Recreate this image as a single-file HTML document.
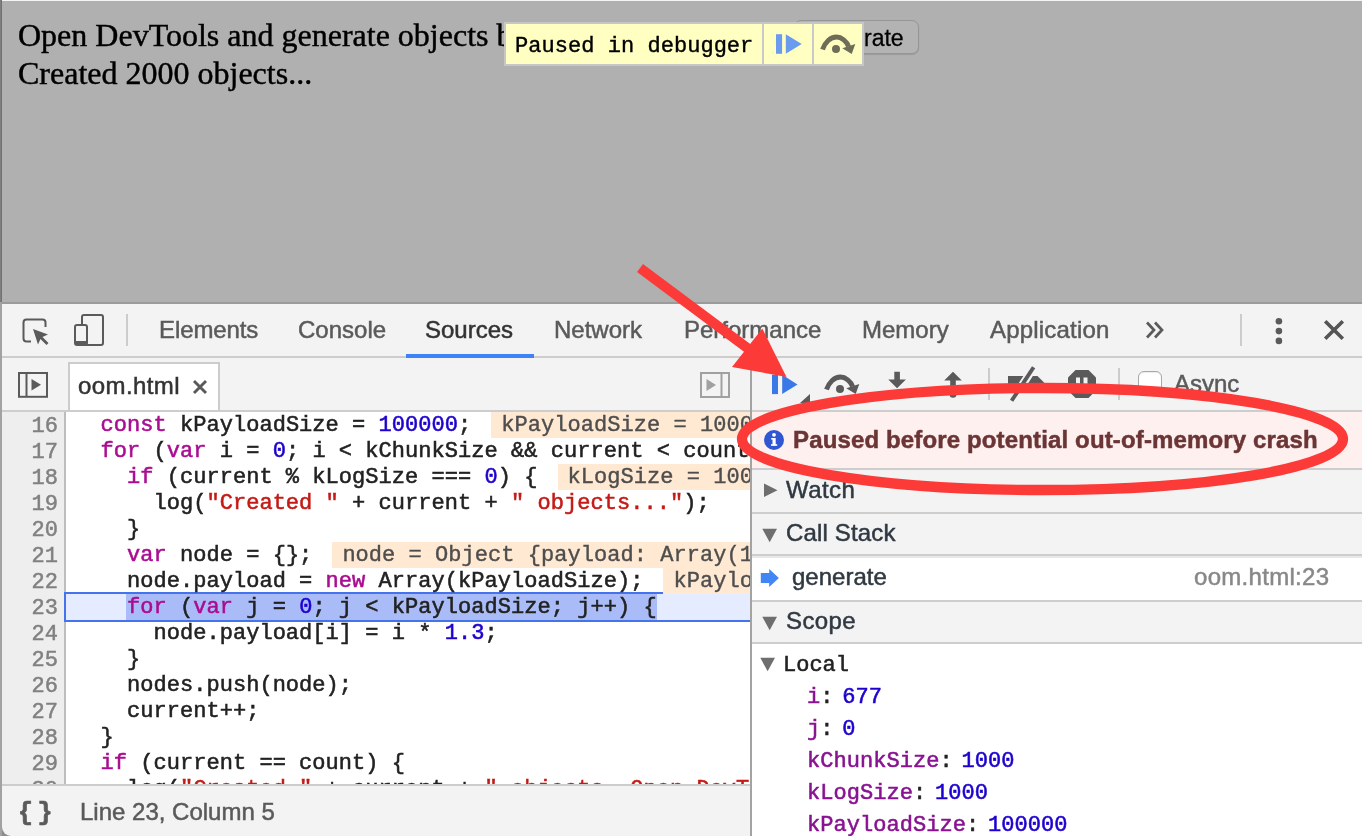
<!DOCTYPE html>
<html>
<head>
<meta charset="utf-8">
<title>oom</title>
<style>
html,body{margin:0;padding:0;}
body{width:1362px;height:836px;overflow:hidden;position:relative;background:#b0b0b0;font-family:"Liberation Sans",sans-serif;}
.abs{position:absolute;}
.t{position:absolute;white-space:pre;line-height:1;will-change:transform;-webkit-text-stroke:0.5px;}
.serif{font-family:"Liberation Serif",serif;font-size:32px;color:#000;}
.mono{font-family:"Liberation Mono",monospace;}
.ui{font-family:"Liberation Sans",sans-serif;font-size:24px;color:#5a5a5a;}
/* page */
#page{left:0;top:0;width:1362px;height:303px;background:#b0b0b0;}
/* devtools */
#dt{left:2px;top:304px;width:1360px;height:532px;background:#f3f3f3;}
.hl{position:absolute;background:#cdcdcd;}
/* code */
#code{left:2px;top:412px;width:748px;height:372px;background:#fff;overflow:hidden;}
#gutter{left:0;top:0;width:62px;height:374px;background:#eee;border-right:2px solid #bdbdbd;}
.ln{will-change:transform;margin-top:1.5px;-webkit-text-stroke:0.5px;position:absolute;left:0;width:56px;text-align:right;font-family:"Liberation Mono",monospace;font-size:22px;line-height:26px;color:#808080;}
.cl{will-change:transform;margin-top:1px;-webkit-text-stroke:0.55px;position:absolute;left:0;height:26px;font-family:"Liberation Mono",monospace;font-size:22px;line-height:26px;color:#222;white-space:pre;letter-spacing:0.04px;}
.k{color:#aa0d91;}
.n{color:#1c00cf;}
.s{color:#c41a16;}
.iv{background:#ffe9d2;color:#4e4e4e;margin-left:20px;padding-left:10px;padding-right:10px;display:inline-block;height:25px;box-shadow:0 -1px 0 0 #ffe9d2;-webkit-text-stroke:0.4px;}
.sel{background:#a9bcf7;display:inline-block;height:25px;box-shadow:0 -1px 0 0 #a9bcf7;margin-left:-1px;padding-left:1px;}
</style>
</head>
<body>
<div id="page" class="abs">
  <div class="abs" style="left:0;top:0;width:1362px;height:1px;background:#f4f4f4;"></div>
  <div class="t serif" id="pl1" style="-webkit-text-stroke:0.45px;left:18px;top:17px;line-height:37px;">Open DevTools and generate objects by clicking</div>
  <div class="t serif" id="pl2" style="-webkit-text-stroke:0.45px;left:18px;top:55px;line-height:37px;">Created 2000 objects...</div>
  <div class="abs" id="genbtn" style="left:794px;top:20px;width:125px;height:34px;box-sizing:border-box;border:1.5px solid #959595;border-radius:7px;background:#b3b3b3;box-shadow:0 1px 1px rgba(0,0,0,0.12);"></div>
  <div class="t" id="gentxt" style="left:863.5px;top:26.5px;font-size:23px;color:#000;-webkit-text-stroke:0.3px;">rate</div>
  <div class="abs" id="pid" style="left:504px;top:22px;width:360px;height:44px;background:#ffffc2;border:2px solid #c6c6c6;box-sizing:border-box;"></div>
  <div class="abs" style="left:762px;top:24px;width:2px;height:40px;background:#c9c9c9;"></div>
  <div class="abs" style="left:812px;top:24px;width:2px;height:40px;background:#c9c9c9;"></div>
  <div class="t mono" id="pidtxt" style="left:515px;top:36px;font-size:22px;color:#000;-webkit-text-stroke:0.4px;letter-spacing:0.04px;">Paused in debugger</div>
  <svg class="abs" style="left:770px;top:30px;" width="36" height="28" viewBox="0 0 36 28"><rect x="6" y="4.2" width="6.1" height="19.6" fill="#6a9bef"/><path d="M15.8 4.2 L31.7 14 L15.8 23.8 Z" fill="#6a9bef"/></svg>
  <svg class="abs" style="left:810.5px;top:24.5px;" width="48" height="36" viewBox="0 0 48 36"><path d="M11.5 24.6 C14 17 19.5 12 25.5 12 C30.5 12 35.8 16.5 37.6 21.5" fill="none" stroke="#6e6e58" stroke-width="4.9"/><path d="M44.3 19.1 L40.7 29 L31.3 23.3 Z" fill="#6e6e58"/><circle cx="25" cy="24" r="4" fill="#6e6e58"/></svg>
</div>
<div class="abs" style="left:0;top:302px;width:1362px;height:2px;background:#9b9b9b;"></div>
<div id="dt" class="abs">
  <!-- main toolbar: y 304..355 => local 0..51 -->
  <div class="hl" style="left:0;top:52px;width:1360px;height:2px;"></div>
  <svg class="abs" style="left:18.5px;top:12.5px;" width="30" height="30" viewBox="0 0 30 30"><path d="M24.5 10 V5.5 Q24.5 2.5 21.5 2.5 H5.5 Q2.5 2.5 2.5 5.5 V21.5 Q2.5 24.5 5.5 24.5 H10" fill="none" stroke="#5a5a5a" stroke-width="2"/><path d="M12 12 L27 17.5 L21.5 20 L27.5 26 L25.5 28 L19.5 22 L17 27.5 Z" fill="#5a5a5a"/></svg>
  <svg class="abs" style="left:70px;top:8px;" width="36" height="36" viewBox="0 0 36 36"><rect x="10" y="3" width="21" height="30" rx="2" fill="none" stroke="#5a5a5a" stroke-width="2"/><rect x="3" y="13" width="12" height="20" rx="2" fill="#f3f3f3" stroke="#5a5a5a" stroke-width="2"/><rect x="3" y="29" width="12" height="4" fill="#5a5a5a"/></svg>
  <div class="abs" style="left:124px;top:10px;width:2px;height:32px;background:#ccc;"></div>
  <div class="t ui" id="tb1" style="letter-spacing:-0.1px;left:157px;top:14px;">Elements</div>
  <div class="t ui" id="tb2" style="left:296px;top:14px;">Console</div>
  <div class="t ui" id="tb3" style="left:423px;top:14px;color:#333;">Sources</div>
  <div class="t ui" id="tb4" style="left:552px;top:14px;">Network</div>
  <div class="t ui" id="tb5" style="left:682px;top:14px;">Performance</div>
  <div class="t ui" id="tb6" style="left:860px;top:14px;">Memory</div>
  <div class="t ui" id="tb7" style="letter-spacing:0.2px;left:988px;top:14px;">Application</div>
  <div class="abs" style="left:404px;top:50px;width:128px;height:4px;background:#3e82f7;"></div>
  <svg class="abs" style="left:1142px;top:16px;" width="24" height="20" viewBox="0 0 24 20"><path d="M3 2.5 L10 10 L3 17.5 M11 2.5 L18 10 L11 17.5" fill="none" stroke="#5a5a5a" stroke-width="2.7"/></svg>
  <div class="abs" style="left:1238px;top:10px;width:2px;height:32px;background:#ccc;"></div>
  <svg class="abs" style="left:1270px;top:12px;" width="14" height="30" viewBox="0 0 14 30"><circle cx="6.9" cy="5.3" r="3.3" fill="#5a5a5a"/><circle cx="6.9" cy="15.1" r="3.3" fill="#5a5a5a"/><circle cx="6.9" cy="24.9" r="3.3" fill="#5a5a5a"/></svg>
  <svg class="abs" style="left:1320px;top:14px;" width="24" height="24" viewBox="0 0 24 24"><path d="M3.2 3.2 L20.8 20.8 M20.8 3.2 L3.2 20.8" fill="none" stroke="#555" stroke-width="3.6"/></svg>

  <!-- second row -->
  <div class="hl" style="left:0;top:106px;width:1360px;height:2px;"></div>
  <svg class="abs" style="left:15px;top:67px;" width="32" height="28" viewBox="0 0 32 28"><rect x="2" y="2" width="28" height="23.8" fill="none" stroke="#5a5a5a" stroke-width="2"/><path d="M9.5 2 V25" stroke="#5a5a5a" stroke-width="2"/><path d="M14.5 8 L24 13.7 L14.5 19.5 Z" fill="#5a5a5a"/></svg>
  <div class="abs" id="ftab" style="left:66px;top:58px;width:152px;height:48px;background:#fff;border:2px solid #ccc;border-bottom:none;box-sizing:border-box;"></div>
  <div class="t" id="ftxt" style="letter-spacing:0.4px;left:75.5px;top:70px;font-size:24px;color:#333;">oom.html</div>
  <svg class="abs" style="left:190px;top:75px;" width="16" height="16" viewBox="0 0 16 16"><path d="M2 2 L14 14 M14 2 L2 14" stroke="#5a5a5a" stroke-width="2.9" fill="none"/></svg>
  <svg class="abs" style="left:696px;top:66px;" width="34" height="30" viewBox="0 0 34 30"><rect x="3" y="3" width="28" height="24" fill="none" stroke="#a0a0a0" stroke-width="2"/><path d="M23.5 3 V27" stroke="#a0a0a0" stroke-width="2"/><path d="M8.5 9 L18 15 L8.5 21 Z" fill="#a0a0a0"/></svg>
  <!-- splitter -->
  <div class="abs" style="left:748px;top:54px;width:2px;height:478px;background:#a3a3a3;"></div>
</div>
<div id="code" class="abs">
<div id="gutter" class="abs"></div>
<div class="abs" style="left:62px;top:180px;width:686px;height:30px;background:#e6ecff;border-top:2px solid #4573ee;border-bottom:2px solid #4573ee;border-left:2px solid #4573ee;box-sizing:border-box;"></div>
<div class="ln" style="top:0px;">16</div>
<div class="cl" style="left:72.3px;top:0px;">  <span class="k">const</span> kPayloadSize = <span class="n">100000</span>;<span class="iv">kPayloadSize = 100000</span></div>
<div class="ln" style="top:26px;">17</div>
<div class="cl" style="left:72.3px;top:26px;">  <span class="k">for</span> (<span class="k">var</span> i = <span class="n">0</span>; i &lt; kChunkSize &amp;&amp; current &lt; count; i++) {</div>
<div class="ln" style="top:52px;">18</div>
<div class="cl" style="left:72.3px;top:52px;">    <span class="k">if</span> (current % kLogSize === <span class="n">0</span>) {<span class="iv">kLogSize = 1000</span></div>
<div class="ln" style="top:78px;">19</div>
<div class="cl" style="left:72.3px;top:78px;">      log(<span class="s">&quot;Created &quot;</span> + current + <span class="s">&quot; objects...&quot;</span>);</div>
<div class="ln" style="top:104px;">20</div>
<div class="cl" style="left:72.3px;top:104px;">    }</div>
<div class="ln" style="top:130px;">21</div>
<div class="cl" style="left:72.3px;top:130px;">    <span class="k">var</span> node = {};<span class="iv">node = Object {payload: Array(100000)}</span></div>
<div class="ln" style="top:156px;">22</div>
<div class="cl" style="left:72.3px;top:156px;">    node.payload = <span class="k">new</span> Array(kPayloadSize);<span class="iv">kPayloadSize = 100000</span></div>
<div class="ln" style="top:182px;">23</div>
<div class="cl" style="left:72.3px;top:182px;">    <span class="sel"><span class="k">for</span> (<span class="k">var</span> j = <span class="n">0</span>; j &lt; kPayloadSize; j++) {</span></div>
<div class="ln" style="top:208px;">24</div>
<div class="cl" style="left:72.3px;top:208px;">      node.payload[i] = i * <span class="n">1.3</span>;</div>
<div class="ln" style="top:234px;">25</div>
<div class="cl" style="left:72.3px;top:234px;">    }</div>
<div class="ln" style="top:260px;">26</div>
<div class="cl" style="left:72.3px;top:260px;">    nodes.push(node);</div>
<div class="ln" style="top:286px;">27</div>
<div class="cl" style="left:72.3px;top:286px;">    current++;</div>
<div class="ln" style="top:312px;">28</div>
<div class="cl" style="left:72.3px;top:312px;">  }</div>
<div class="ln" style="top:338px;">29</div>
<div class="cl" style="left:72.3px;top:338px;">  <span class="k">if</span> (current == count) {</div>
<div class="ln" style="top:364px;">30</div>
<div class="cl" style="left:72.3px;top:364px;">    log(<span class="s">&quot;Created &quot;</span> + current + <span class="s">&quot; objects. Open DevTools&quot;</span>);</div>
</div>
<div class="abs" style="left:2px;top:784px;width:748px;height:2px;background:#ccc;"></div>
<div class="abs" style="left:2px;top:822px;width:14px;height:14px;background:#8c8c8c;"></div><div class="abs" style="left:2px;top:786px;width:748px;height:50px;background:#f3f3f3;border-bottom-left-radius:9px;"></div>
<div class="t mono" id="braces" style="left:17.5px;top:800.5px;font-size:25px;font-weight:bold;color:#5a5a5a;letter-spacing:4.5px;-webkit-text-stroke:0.7px;">{}</div>
<div class="t" id="lc" style="left:80px;top:800px;font-size:24px;color:#5a5a5a;">Line 23, Column 5</div>
<div id="rp" class="abs" style="left:752px;top:358px;width:610px;height:478px;background:#f3f3f3;overflow:hidden;">
<svg class="abs" style="left:16px;top:12px;" width="44" height="36" viewBox="0 0 44 36"><rect x="4" y="4.7" width="6" height="19.4" fill="#3b78e7"/><path d="M14.2 4.7 L29.5 14.4 L14.2 24.1 Z" fill="#3b78e7"/><path d="M32 33 L42 33 L42 24 Z" fill="#5a5a5a"/></svg>
<svg class="abs" style="left:63px;top:7px;" width="48" height="36" viewBox="0 0 48 36"><path d="M11.5 24.6 C14 17 19.5 12 25.5 12 C30.5 12 35.8 16.5 37.6 21.5" fill="none" stroke="#5a5a5a" stroke-width="4.9"/><path d="M44.3 19.1 L40.7 29 L31.3 23.3 Z" fill="#5a5a5a"/><circle cx="25" cy="24" r="4" fill="#5a5a5a"/></svg>
<svg class="abs" style="left:133px;top:12px;" width="24" height="36" viewBox="0 0 24 36"><path d="M9.3 1.7 H14.9 V9.5 H20.9 L12.1 18.2 L3.3 9.5 H9.3 Z" fill="#5a5a5a"/><circle cx="12.1" cy="24.5" r="3.6" fill="#5a5a5a"/></svg>
<svg class="abs" style="left:189px;top:12px;" width="24" height="36" viewBox="0 0 24 36"><path d="M9.2 24 V10.5 H3.2 L12 1.7 L20.8 10.5 H14.8 V24 Z" fill="#5a5a5a"/><circle cx="12" cy="24.2" r="3.5" fill="#5a5a5a"/></svg>
<div class="abs" style="left:236px;top:10px;width:2px;height:32px;background:#ccc;"></div>
<svg class="abs" style="left:252px;top:6px;" width="44" height="40" viewBox="0 0 44 40"><path d="M4 12 H33.5 L41.5 20 L33.5 28 H4 Z" fill="#5a5a5a"/><path d="M30.5 2 L8.5 36" stroke="#f3f3f3" stroke-width="8"/><path d="M29.6 3.3 L7.6 36.8" stroke="#5a5a5a" stroke-width="3.9"/></svg>
<svg class="abs" style="left:314px;top:10px;" width="32" height="32" viewBox="0 0 32 32"><path d="M9.5 2 H22.5 L30 9.5 V22.5 L22.5 30 H9.5 L2 22.5 V9.5 Z" fill="#5a5a5a"/><rect x="10" y="9.5" width="4" height="11" fill="#f3f3f3"/><rect x="17.5" y="9.5" width="4" height="11" fill="#f3f3f3"/></svg>
<div class="abs" style="left:366px;top:10px;width:2px;height:32px;background:#ccc;"></div>
<div class="abs" style="left:386px;top:13px;width:24px;height:24px;box-sizing:border-box;border:1.5px solid #a9a9a9;border-radius:6px;background:#fff;box-shadow:inset 0 1px 1px rgba(0,0,0,0.08);"></div>
<div class="t" id="async" style="left:422px;top:14px;font-size:24px;color:#5a5a5a;">Async</div>
<div class="hl" style="left:0;top:52px;width:610px;height:2px;"></div>
<div class="abs" style="left:0;top:54px;width:610px;height:56px;background:#fff0f0;"></div>
<div class="hl" style="left:0;top:110px;width:610px;height:2px;"></div>
<svg class="abs" style="left:11px;top:71px;" width="22" height="22" viewBox="0 0 22 22"><circle cx="11" cy="11" r="10" fill="#3056d3"/><rect x="9.5" y="9" width="3.2" height="7.5" fill="#fff"/><rect x="8.2" y="9" width="3" height="1.6" fill="#fff"/><rect x="8" y="15.2" width="6.2" height="1.6" fill="#fff"/><circle cx="11" cy="5.8" r="1.9" fill="#fff"/></svg>
<div class="t" id="pmsg" style="letter-spacing:0.14px;left:41px;top:70px;font-size:24px;font-weight:bold;color:#6c3535;">Paused before potential out-of-memory crash</div>
<svg class="abs" style="left:12px;top:125px;" width="16" height="16" viewBox="0 0 16 16"><path d="M0 0.5 L13.5 7.3 L0 14 Z" fill="#6e6e6e"/></svg>
<div class="t" id="watch" style="letter-spacing:0.4px;left:34px;top:120px;font-size:24px;color:#303942;">Watch</div>
<div class="hl" style="left:0;top:154px;width:610px;height:2px;"></div>
<svg class="abs" style="left:10px;top:170px;" width="16" height="16" viewBox="0 0 16 16"><path d="M0.3 0.8 L15 0.8 L7.65 14.2 Z" fill="#6e6e6e"/></svg>
<div class="t" id="cs" style="letter-spacing:0.15px;left:34px;top:163px;font-size:24px;color:#303942;">Call Stack</div>
<div class="hl" style="left:0;top:196px;width:610px;height:2px;"></div>
<div class="abs" style="left:0;top:198px;width:610px;height:2px;background:#e8e8e8;"></div>
<div class="abs" style="left:0;top:200px;width:610px;height:42px;background:#fff;"></div>
<svg class="abs" style="left:8px;top:210px;" width="20" height="20" viewBox="0 0 20 20"><path d="M0.8 4.9 H9.2 V0.9 L18.9 10 L9.2 19 V15 H0.8 Z" fill="#4285f4"/></svg>
<div class="t" id="gen" style="left:40px;top:207px;font-size:24px;color:#303942;">generate</div>
<div class="t" id="loc" style="letter-spacing:0.3px;left:441.5px;top:207px;font-size:24px;color:#888;">oom.html:23</div>
<div class="hl" style="left:0;top:242px;width:610px;height:2px;"></div>
<svg class="abs" style="left:10px;top:258px;" width="16" height="16" viewBox="0 0 16 16"><path d="M0.3 0.8 L15 0.8 L7.65 14.2 Z" fill="#6e6e6e"/></svg>
<div class="t" id="scope" style="letter-spacing:0.4px;left:34px;top:251px;font-size:24px;color:#303942;">Scope</div>
<div class="hl" style="left:0;top:284px;width:610px;height:2px;"></div>
<div class="abs" style="left:0;top:286px;width:610px;height:200px;background:#fff;"></div>
<svg class="abs" style="left:8px;top:299px;" width="16" height="16" viewBox="0 0 16 16"><path d="M0.3 0.8 L15 0.8 L7.65 14.2 Z" fill="#6e6e6e"/></svg>
<div class="t mono" style="left:30.5px;top:297px;font-size:22px;color:#222;-webkit-text-stroke:0.55px;">Local</div>
<div class="t mono" style="left:55px;top:329px;font-size:22px;color:#222;letter-spacing:0.04px;-webkit-text-stroke:0.55px;"><span style="color:#881391">i</span><span style="letter-spacing:-2.2px">: </span><span style="color:#1c00cf">677</span></div>
<div class="t mono" style="left:55px;top:361px;font-size:22px;color:#222;letter-spacing:0.04px;-webkit-text-stroke:0.55px;"><span style="color:#881391">j</span><span style="letter-spacing:-2.2px">: </span><span style="color:#1c00cf">0</span></div>
<div class="t mono" style="left:55px;top:393px;font-size:22px;color:#222;letter-spacing:0.04px;-webkit-text-stroke:0.55px;"><span style="color:#881391">kChunkSize</span><span style="letter-spacing:-2.2px">: </span><span style="color:#1c00cf">1000</span></div>
<div class="t mono" style="left:55px;top:425px;font-size:22px;color:#222;letter-spacing:0.04px;-webkit-text-stroke:0.55px;"><span style="color:#881391">kLogSize</span><span style="letter-spacing:-2.2px">: </span><span style="color:#1c00cf">1000</span></div>
<div class="t mono" style="left:55px;top:457px;font-size:22px;color:#222;letter-spacing:0.04px;-webkit-text-stroke:0.55px;"><span style="color:#881391">kPayloadSize</span><span style="letter-spacing:-2.2px">: </span><span style="color:#1c00cf">100000</span></div>
</div>
<svg id="anno" class="abs" style="left:0;top:0;" width="1362" height="836" viewBox="0 0 1362 836">
  <ellipse cx="1042.5" cy="439" rx="300.5" ry="51" fill="none" stroke="#fc3b39" stroke-width="10.3"/>
  <path d="M640 268 L750 350" stroke="#fc3b39" stroke-width="10" fill="none"/>
  <path d="M786.5 377 L732 367 L762.3 328.6 Z" fill="#fc3b39"/>
</svg>
<div class="abs" style="left:0;top:0;width:2px;height:302px;background:linear-gradient(90deg,#848484,#6c6c6c);"></div><div class="abs" style="left:0;top:302px;width:2px;height:534px;background:#a2a2a2;"></div>
</body>
</html>
